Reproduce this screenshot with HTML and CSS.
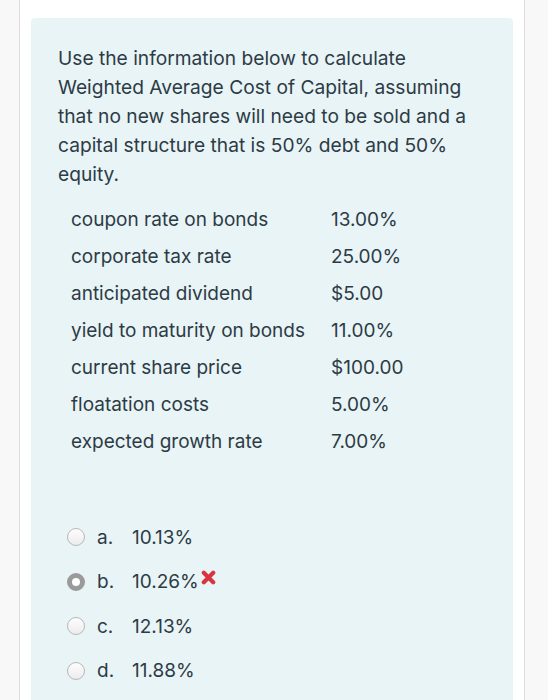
FILE: index.html
```html
<!DOCTYPE html>
<html>
<head>
<meta charset="utf-8">
<link rel="stylesheet" href="styles.css">
</head>
<body>
<div class="page">
  <div class="question">
    <p class="prompt">Use the information below to calculate Weighted Average Cost of Capital, assuming that no new shares will need to be sold and a capital structure that is 50% debt and 50% equity.</p>
    <table class="data">
      <tr><td class="label">coupon rate on bonds</td><td>13.00%</td></tr>
      <tr><td class="label">corporate tax rate</td><td>25.00%</td></tr>
      <tr><td class="label">anticipated dividend</td><td>$5.00</td></tr>
      <tr><td class="label">yield to maturity on bonds</td><td>11.00%</td></tr>
      <tr><td class="label">current share price</td><td>$100.00</td></tr>
      <tr><td class="label">floatation costs</td><td>5.00%</td></tr>
      <tr><td class="label">expected growth rate</td><td>7.00%</td></tr>
    </table>
    <div class="options">
      <div class="option"><span class="radio"></span><span class="letter">a.</span><span class="value">10.13%</span></div>
      <div class="option"><span class="radio checked"></span><span class="letter">b.</span><span class="value">10.26%</span><svg class="wrong" width="15" height="15" viewBox="0 0 16 16"><path d="M3 3 L13 13 M13 3 L3 13" stroke="#d9343f" stroke-width="4.5" stroke-linecap="round"/></svg></div>
      <div class="option"><span class="radio"></span><span class="letter">c.</span><span class="value">12.13%</span></div>
      <div class="option"><span class="radio"></span><span class="letter">d.</span><span class="value">11.88%</span></div>
    </div>
  </div>
</div>
</body>
</html>
```
FILE: styles.css
```css
html, body {
  margin: 0;
  padding: 0;
  background: #f8f8f8;
}
body {
  font-family: Inter, "Open Sans", sans-serif;
  color: #2d3b45;
}
.page {
  margin-left: 19px;
  width: 506px;
  height: 700px;
  overflow: hidden;
  background: #fff;
  border-left: 1px solid #dcdcdc;
  border-right: 1px solid #dcdcdc;
  padding: 18px 11px 0 11px;
  box-sizing: border-box;
}
.question {
  background: #e8f4f6;
  border-radius: 4px;
  padding: 26px 27px 30px 27px;
  min-height: 720px;
}
.prompt {
  margin: 0;
  font-size: 19.2px;
  line-height: 29px;
}
.data {
  border-collapse: collapse;
  margin: 12px 0 0 13px;
  font-size: 19px;
}
.data td {
  padding: 0;
  height: 37px;
  vertical-align: middle;
}
.data td.label {
  width: 260px;
}
.options {
  margin-top: 55px;
  display: flex;
  flex-direction: column;
  margin-left: 9px;
}
.option {
  display: flex;
  align-items: center;
  height: 44.5px;
  font-size: 19px;
}
.radio {
  width: 18px;
  height: 18px;
  border-radius: 50%;
  box-sizing: border-box;
  border: 1px solid #b8b8b8;
  background: linear-gradient(#fdfdfd, #ececec);
  margin-right: 12px;
  flex: none;
}
.radio.checked {
  border: 5px solid #9a9a9a;
  background: #fff;
}
.letter {
  width: 35px;
}
.wrong {
  margin-left: 2px;
  margin-top: -8px;
}
```
